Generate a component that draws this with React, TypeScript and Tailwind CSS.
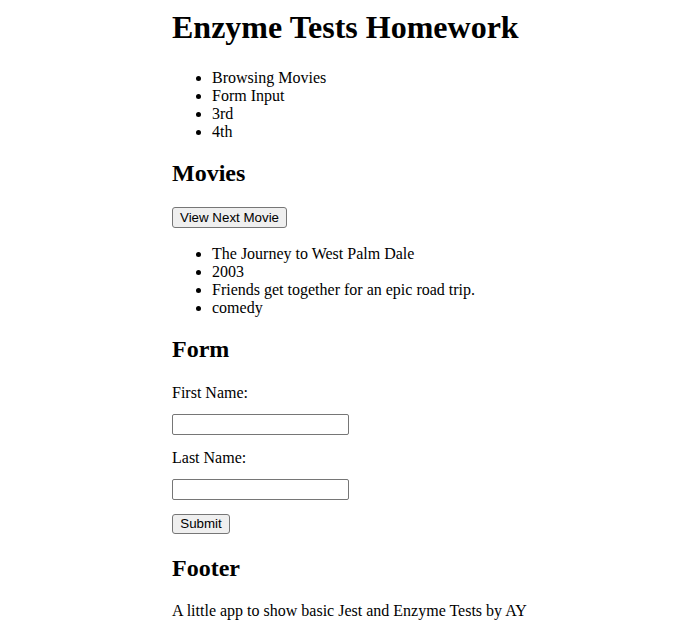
export default function App() {
  return (
    <div className="min-h-screen bg-white pl-[172px] pt-[9px] font-['Liberation_Serif',serif] text-[16px] text-black">
      <h1 className="text-[32px] font-bold leading-[37px]">Enzyme Tests Homework</h1>
      <ul className="mt-[23px] list-disc pl-[40px] leading-[18px]">
        <li>Browsing Movies</li>
        <li>Form Input</li>
        <li>3rd</li>
        <li>4th</li>
      </ul>
      <h2 className="mt-[18px] text-[24px] font-bold leading-[28px]">Movies</h2>
      <div className="mt-[20px] flex">
        <button className="h-[21px] rounded-[3px] border border-[#767676] bg-[#efefef] px-[7px] font-['Liberation_Sans',Arial,sans-serif] text-[13.33px] leading-[17px] text-black">
          View Next Movie
        </button>
      </div>
      <ul className="mt-[17px] list-disc pl-[40px] leading-[18px]">
        <li>The Journey to West Palm Dale</li>
        <li>2003</li>
        <li>Friends get together for an epic road trip.</li>
        <li>comedy</li>
      </ul>
      <h2 className="mt-[18px] text-[24px] font-bold leading-[28px]">Form</h2>
      <form className="flex flex-col items-start" onSubmit={(e) => e.preventDefault()}>
        <label className="mt-[21px] leading-[18px]">First Name:</label>
        <input type="text" className="mt-[12px] h-[21px] w-[177px] rounded-[2px] border border-[#767676] bg-white px-[2px] font-['Liberation_Sans',Arial,sans-serif] text-[13.33px]" />
        <label className="mt-[14px] leading-[18px]">Last Name:</label>
        <input type="text" className="mt-[12px] h-[21px] w-[177px] rounded-[2px] border border-[#767676] bg-white px-[2px] font-['Liberation_Sans',Arial,sans-serif] text-[13.33px]" />
        <button type="submit" className="mt-[14px] h-[20px] w-[58px] rounded-[3px] border border-[#767676] bg-[#efefef] font-['Liberation_Sans',Arial,sans-serif] text-[13.33px] leading-[16px] text-black">
          Submit
        </button>
      </form>
      <h2 className="mt-[20px] text-[24px] font-bold leading-[28px]">Footer</h2>
      <p className="mt-[20px] leading-[18px]">A little app to show basic Jest and Enzyme Tests by AY</p>
    </div>
  );
}
